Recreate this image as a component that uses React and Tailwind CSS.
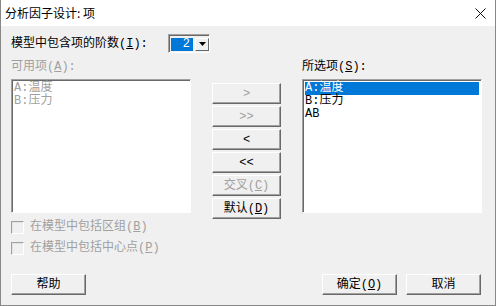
import React from "react";

const font = { fontFamily: "'Liberation Mono','Noto Sans CJK SC',monospace" };

const Btn = ({ children, disabled, className = "" }) => (
  <div
    className={`flex items-center justify-center h-[21px] bg-[#f0f0f0] border border-t-white border-l-white border-b-[#696969] border-r-[#696969] shadow-[inset_-1px_-1px_#a0a0a0] text-[12px] leading-[12px] ${
      disabled ? "text-[#a0a0a0]" : "text-black"
    } ${className}`}
  >
    {children}
  </div>
);

const U = ({ children }) => <span className="underline underline-offset-1">{children}</span>;

const Check = ({ children }) => (
  <div className="flex items-center h-[13px] gap-[6px] text-[12px] leading-[13px] text-[#a0a0a0]">
    <div className="w-[13px] h-[13px] bg-[#f0f0f0] border border-t-[#a0a0a0] border-l-[#a0a0a0] border-b-white border-r-white shadow-[inset_1px_1px_#e3e3e3]" />
    <span>{children}</span>
  </div>
);

const ListBox = ({ children }) => (
  <div className="h-[134px] bg-white border border-t-[#a0a0a0] border-l-[#a0a0a0] border-b-white border-r-white shadow-[inset_1px_1px_#696969] p-[2px] pl-[2px] text-[12px] leading-[13px]">
    {children}
  </div>
);

export default function App() {
  return (
    <div
      className="w-[496px] h-[306px] bg-[#f0f0f0] border-x border-b border-[#888] flex flex-col overflow-hidden"
      style={font}
    >
      {/* title bar */}
      <div className="h-[26px] bg-white flex items-center justify-between pl-[4px] pr-[9px] shrink-0">
        <span className="text-[12px] text-black" style={{ fontFamily: "'Noto Sans CJK SC',sans-serif" }}>
          分析因子设计: 项
        </span>
        <svg width="11" height="11" viewBox="0 0 11 11">
          <path d="M0.5 0.5L10.5 10.5M10.5 0.5L0.5 10.5" stroke="#111" strokeWidth="1" />
        </svg>
      </div>

      <div className="flex flex-col pl-[10px] pt-[8px]">
        {/* order row */}
        <div className="flex items-center h-[19px]">
          <span className="w-[157px] text-[12px] leading-[12px] text-black">
            模型中包含项的阶数(<U>I</U>):
          </span>
          <div className="flex items-center w-[42px] h-[19px] bg-[#f0f0f0] border border-t-[#a0a0a0] border-l-[#a0a0a0] border-b-white border-r-white shadow-[inset_1px_1px_#696969] pl-[2px] pt-[1px]">
            <div className="w-[22px] h-[13px] bg-[#0078d7] text-white text-[12px] leading-[13px] text-right pr-[3px]">
              2
            </div>
            <div className="ml-[2px] w-[14px] h-[13px] bg-[#f0f0f0] border border-t-white border-l-white border-b-[#696969] border-r-[#696969] flex items-center justify-center">
              <svg width="7" height="4" viewBox="0 0 7 4">
                <path d="M0 0H7L3.5 4Z" fill="#000" />
              </svg>
            </div>
          </div>
        </div>

        {/* lists */}
        <div className="grid grid-cols-[180px_69px_180px] gap-x-[21px] mt-[7px]">
          <div className="text-[12px] leading-[14px] text-[#a0a0a0] h-[19px]">
            可用项(<U>A</U>):
          </div>
          <div />
          <div className="text-[12px] leading-[14px] text-black h-[19px]">
            所选项(<U>S</U>):
          </div>

          <ListBox>
            <div className="text-[#a0a0a0]">A:温度</div>
            <div className="text-[#a0a0a0]">B:压力</div>
          </ListBox>
          <div className="flex flex-col gap-[2px] pt-[4px]">
            <Btn disabled>&gt;</Btn>
            <Btn disabled>&gt;&gt;</Btn>
            <Btn>&lt;</Btn>
            <Btn>&lt;&lt;</Btn>
            <Btn disabled>
              交叉(<U>C</U>)
            </Btn>
            <Btn>
              默认(<U>D</U>)
            </Btn>
          </div>
          <ListBox>
            <div className="bg-[#0078d7] text-white">A:温度</div>
            <div className="text-black">B:压力</div>
            <div className="text-black">AB</div>
          </ListBox>
        </div>

        {/* checkboxes */}
        <div className="flex flex-col gap-[8px] mt-[2px]">
          <Check>
            在模型中包括区组(<U>B</U>)
          </Check>
          <Check>
            在模型中包括中心点(<U>P</U>)
          </Check>
        </div>

        {/* bottom buttons */}
        <div className="flex items-center mt-[19px] pr-[14px]">
          <Btn className="w-[75px]">帮助</Btn>
          <div className="flex-1" />
          <Btn className="w-[75px]">
            确定(<U>O</U>)
          </Btn>
          <Btn className="w-[75px] ml-[9px]">取消</Btn>
        </div>
      </div>
    </div>
  );
}
